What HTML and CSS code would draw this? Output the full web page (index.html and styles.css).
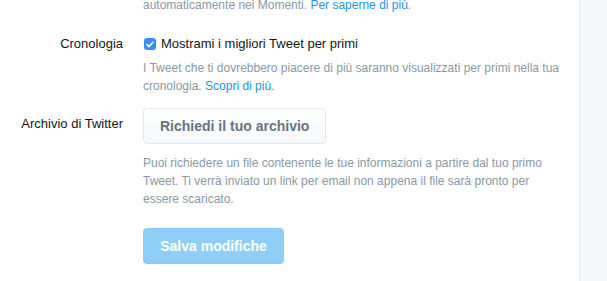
FILE: index.html
```html
<!DOCTYPE html>
<html lang="it">
<head>
  <meta charset="UTF-8" />
  <title>Impostazioni account</title>
  <link rel="stylesheet" href="styles.css">
</head>
<body>

<div class="page">
    <div class="settings">
        <!-- fine della sezione precedente -->
        <div class="row row-top">
            <div class="label"></div>
            <div class="field">
                <p class="help">automaticamente nei Momenti. <a href="#">Per saperne di più</a>.</p>
            </div>
        </div>

        <div class="row">
            <div class="label">Cronologia</div>
            <div class="field">
                <label class="check">
                    <span class="check-box">
                        <svg width="8" height="7" viewBox="0 0 8 7"><path d="M1 3.6 L3.1 5.6 L7 1.2" fill="none" stroke="#fff" stroke-width="1.5" stroke-linecap="round" stroke-linejoin="round"/></svg>
                    </span>
                    Mostrami i migliori Tweet per primi
                </label>
                <p class="help help-check">I Tweet che ti dovrebbero piacere di più saranno visualizzati per primi nella tua cronologia. <a href="#">Scopri di più</a>.</p>
            </div>
        </div>

        <div class="row">
            <div class="label label-btn">Archivio di Twitter</div>
            <div class="field">
                <button class="btn">Richiedi il tuo archivio</button>
                <p class="help help-archive">Puoi richiedere un file contenente le tue informazioni a partire dal tuo primo Tweet. Ti verrà inviato un link per email non appena il file sarà pronto per essere scaricato.</p>
            </div>
        </div>

        <div class="row row-save">
            <div class="label"></div>
            <div class="field">
                <button class="btn btn-primary" disabled>Salva modifiche</button>
            </div>
        </div>
    </div>
    <div class="sidebar"></div>
</div>

</body>
</html>
```

FILE: styles.css
```css
body {
    margin: 0;
    font-family: "Liberation Sans", Arial, sans-serif;
    color: #14171a;
    background: #fff;
}
.page {
    display: flex;
    height: 281px;
    overflow: hidden;
}
.settings {
    width: 579px;
    border-right: 1px solid #e6ecf0;
    margin-top: -8px;
}
.sidebar {
    flex: 1;
    background: #f5f8fa;
}

/* righe del modulo */
.row {
    display: grid;
    grid-template-columns: 123px 1fr;
    column-gap: 20px;
    margin-bottom: 13px;
}
.row-top {
    margin-bottom: 21px;
}
.label {
    text-align: right;
    font-size: 13px;
    line-height: 18px;
}
.label-btn {
    padding-top: 7px;
}
.field {
    width: 420px;
}
.help {
    margin: 4px 0 0;
    font-size: 12px;
    line-height: 18px;
    color: #8899a6;
}
.help-check {
    margin-top: 6px;
}
.help-archive {
    margin-top: 10px;
}
.help a {
    color: #1b95e0;
    text-decoration: none;
}

/* checkbox */
.check {
    display: flex;
    align-items: center;
    font-size: 13px;
    line-height: 18px;
}
.check-box {
    width: 12px;
    height: 12px;
    border-radius: 3px;
    background: #3b8cf6;
    display: inline-flex;
    align-items: center;
    justify-content: center;
    margin: 0 5px 0 1px;
}

/* bottoni */
.btn {
    height: 36px;
    padding: 0 16px;
    font-family: inherit;
    font-size: 14px;
    font-weight: bold;
    color: #66757f;
    background: linear-gradient(#fff, #f5f8fa);
    border: 1px solid #e1e8ed;
    border-radius: 4px;
    cursor: pointer;
}
.btn-primary {
    width: 141px;
    color: #fff;
    background: #8fcef7;
    border-color: #8ec9f1;
}
.row-save {
    margin-top: 20px;
}
```
